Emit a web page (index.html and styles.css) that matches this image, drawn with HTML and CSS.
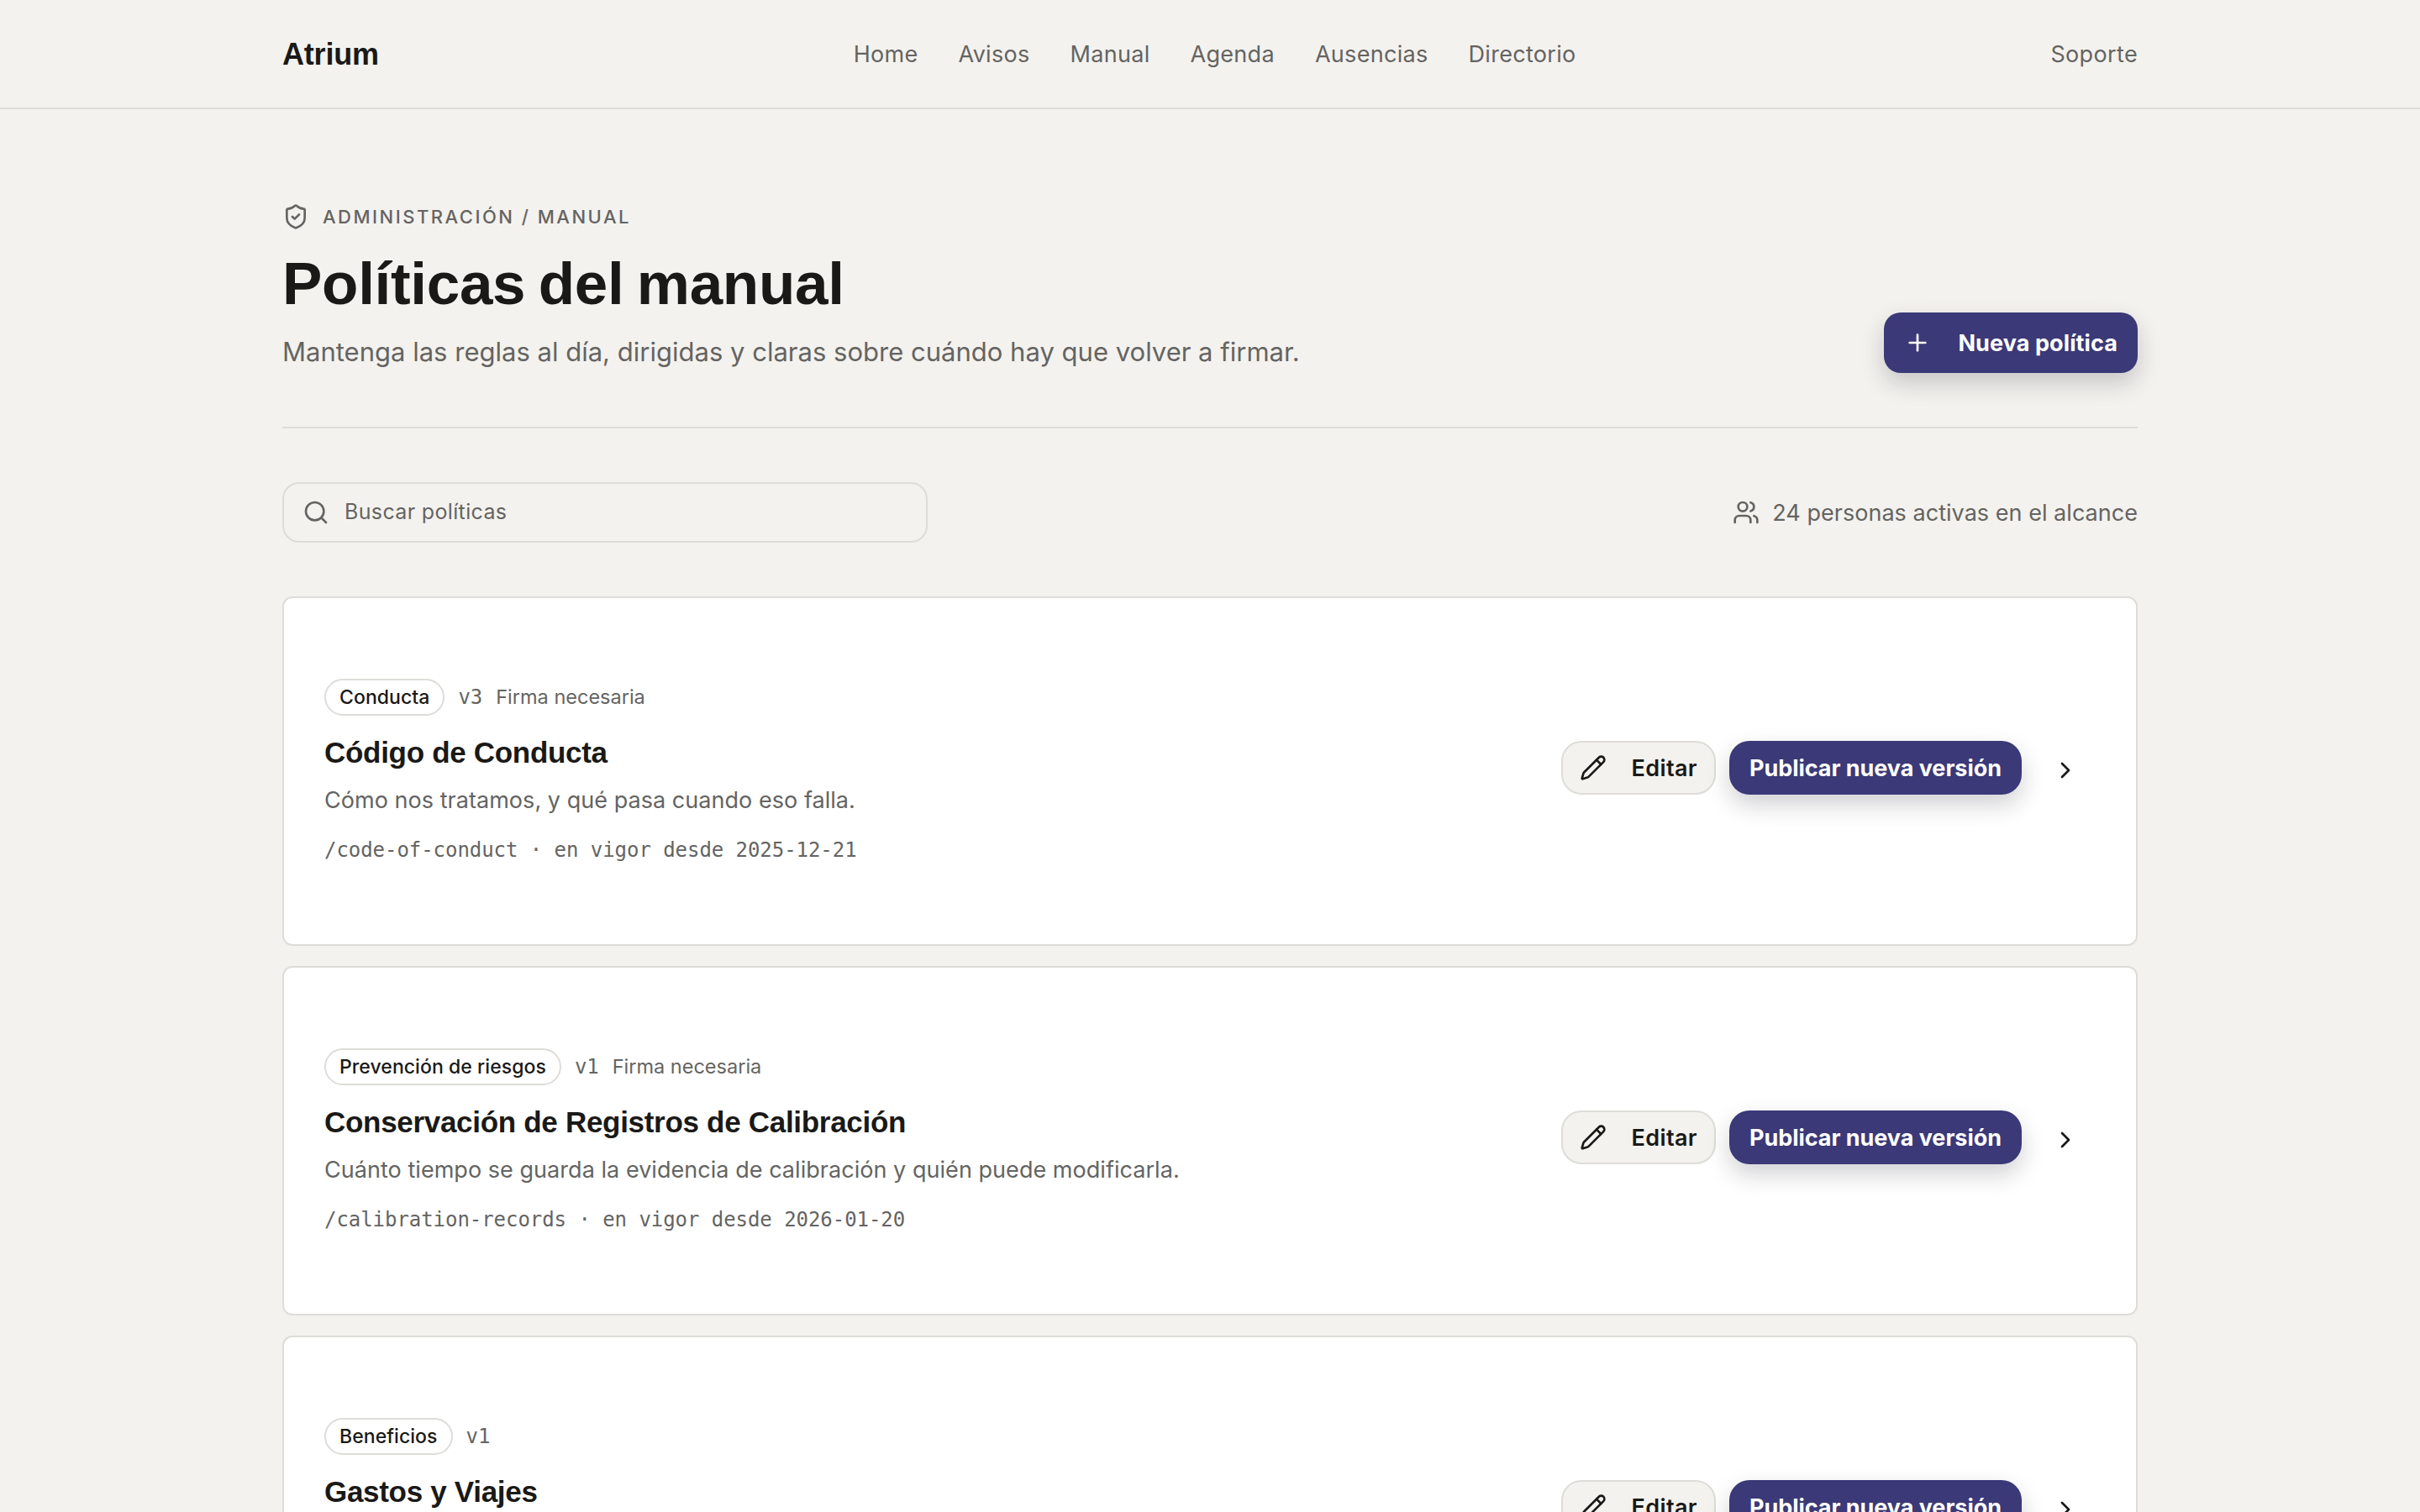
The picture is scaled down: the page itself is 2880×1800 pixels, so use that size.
FILE: index.html
```html
<!DOCTYPE html>
<html lang="es">
<head>
    <meta charset="utf-8">
    <title>Políticas del manual - Atrium</title>
    <link rel="stylesheet" href="styles.css">
</head>
<body>
    <header class="topbar">
        <div class="container topbar-inner">
            <a class="brand">Atrium</a>
            <nav class="nav">
                <a>Home</a>
                <a>Avisos</a>
                <a>Manual</a>
                <a>Agenda</a>
                <a>Ausencias</a>
                <a>Directorio</a>
            </nav>
            <a class="support">Soporte</a>
        </div>
    </header>

    <main class="container">
        <section class="page-head">
            <div>
                <div class="eyebrow">
                    <svg class="icon icon-shield" viewBox="0 0 24 24"><path d="M20 13c0 5-3.5 7.5-7.66 8.95a1 1 0 0 1-.67-.01C7.5 20.5 4 18 4 13V6a1 1 0 0 1 1-1c2 0 4.5-1.2 6.24-2.72a1.17 1.17 0 0 1 1.52 0C14.51 3.81 17 5 19 5a1 1 0 0 1 1 1z"/><path d="m9 12 2 2 4-4"/></svg>
                    <span>Administración / Manual</span>
                </div>
                <h1>Políticas del manual</h1>
                <p class="lead">Mantenga las reglas al día, dirigidas y claras sobre cuándo hay que volver a firmar.</p>
            </div>
            <button class="btn btn-primary btn-new">
                <svg class="icon icon-plus" viewBox="0 0 24 24"><path d="M5 12h14"/><path d="M12 5v14"/></svg>
                <span>Nueva política</span>
            </button>
        </section>

        <section class="toolbar">
            <label class="search">
                <svg class="icon icon-search" viewBox="0 0 24 24"><circle cx="11" cy="11" r="8"/><path d="m21 21-4.3-4.3"/></svg>
                <input type="text" placeholder="Buscar políticas">
            </label>
            <div class="scope">
                <svg class="icon icon-users" viewBox="0 0 24 24"><path d="M16 21v-2a4 4 0 0 0-4-4H6a4 4 0 0 0-4 4v2"/><circle cx="9" cy="7" r="4"/><path d="M22 21v-2a4 4 0 0 0-3-3.87"/><path d="M16 3.13a4 4 0 0 1 0 7.75"/></svg>
                <span>24 personas activas en el alcance</span>
            </div>
        </section>

        <section class="policies">
            <article class="policy">
                <div class="policy-info">
                    <div class="meta"><span class="tag">Conducta</span><span class="version">v3</span><span class="sign">Firma necesaria</span></div>
                    <h2>Código de Conducta</h2>
                    <p class="summary">Cómo nos tratamos, y qué pasa cuando eso falla.</p>
                    <p class="slug">/code-of-conduct · en vigor desde 2025-12-21</p>
                </div>
                <div class="actions">
                    <button class="btn btn-edit"><svg class="icon icon-pencil" viewBox="0 0 24 24"><path d="M21.174 6.812a1 1 0 0 0-3.986-3.987L3.842 16.174a2 2 0 0 0-.5.83l-1.321 4.352a.5.5 0 0 0 .623.622l4.353-1.32a2 2 0 0 0 .83-.497z"/><path d="m15 5 4 4"/></svg><span>Editar</span></button>
                    <button class="btn btn-primary btn-publish"><span>Publicar nueva versión</span></button>
                    <svg class="icon icon-chevron" viewBox="0 0 24 24"><path d="m9 18 6-6-6-6"/></svg>
                </div>
            </article>

            <article class="policy">
                <div class="policy-info">
                    <div class="meta"><span class="tag">Prevención de riesgos</span><span class="version">v1</span><span class="sign">Firma necesaria</span></div>
                    <h2>Conservación de Registros de Calibración</h2>
                    <p class="summary">Cuánto tiempo se guarda la evidencia de calibración y quién puede modificarla.</p>
                    <p class="slug">/calibration-records · en vigor desde 2026-01-20</p>
                </div>
                <div class="actions">
                    <button class="btn btn-edit"><svg class="icon icon-pencil" viewBox="0 0 24 24"><path d="M21.174 6.812a1 1 0 0 0-3.986-3.987L3.842 16.174a2 2 0 0 0-.5.83l-1.321 4.352a.5.5 0 0 0 .623.622l4.353-1.32a2 2 0 0 0 .83-.497z"/><path d="m15 5 4 4"/></svg><span>Editar</span></button>
                    <button class="btn btn-primary btn-publish"><span>Publicar nueva versión</span></button>
                    <svg class="icon icon-chevron" viewBox="0 0 24 24"><path d="m9 18 6-6-6-6"/></svg>
                </div>
            </article>

            <article class="policy">
                <div class="policy-info">
                    <div class="meta"><span class="tag">Beneficios</span><span class="version">v1</span></div>
                    <h2>Gastos y Viajes</h2>
                </div>
                <div class="actions">
                    <button class="btn btn-edit"><svg class="icon icon-pencil" viewBox="0 0 24 24"><path d="M21.174 6.812a1 1 0 0 0-3.986-3.987L3.842 16.174a2 2 0 0 0-.5.83l-1.321 4.352a.5.5 0 0 0 .623.622l4.353-1.32a2 2 0 0 0 .83-.497z"/><path d="m15 5 4 4"/></svg><span>Editar</span></button>
                    <button class="btn btn-primary btn-publish"><span>Publicar nueva versión</span></button>
                    <svg class="icon icon-chevron" viewBox="0 0 24 24"><path d="m9 18 6-6-6-6"/></svg>
                </div>
            </article>
        </section>
    </main>
</body>
</html>
```
FILE: styles.css
```css
* {
    box-sizing: border-box;
}

html, body {
    height: 100%;
    overflow: hidden;
}

body {
    margin: 0;
    background: #f4f2ee;
    color: #1a1917;
    font-family: Inter, "Liberation Sans", sans-serif;
    font-size: 27px;
    line-height: 40px;
}

h1, h2, p {
    margin: 0;
}

h1, h2, .brand {
    font-family: "Liberation Sans", Arial, sans-serif;
    font-weight: 700;
}

.container {
    width: 2208px;
    margin: 0 auto;
}

.icon {
    flex: none;
    fill: none;
    stroke: currentColor;
    stroke-width: 2;
    stroke-linecap: round;
    stroke-linejoin: round;
}

/* header */

.topbar {
    height: 130px;
    border-bottom: 2px solid #dddcd8;
}

.topbar-inner {
    height: 128px;
    display: flex;
    justify-content: space-between;
    align-items: center;
    color: #646462;
}

.brand {
    padding-top: 1px;
    color: #1a1917;
    font-size: 36px;
    letter-spacing: -0.2px;
}

.nav {
    display: flex;
    gap: 48px;
    padding-top: 1px;
    letter-spacing: 0.3px;
}

.support {
    padding-top: 1px;
    letter-spacing: 0.35px;
}

/* page heading */

.page-head {
    height: 380px;
    padding: 108px 0 64px;
    border-bottom: 2px solid #dddcd8;
    display: flex;
    justify-content: space-between;
    align-items: flex-end;
}

.eyebrow {
    display: flex;
    align-items: center;
    gap: 16px;
    height: 40px;
    font-size: 22px;
    font-weight: 500;
    letter-spacing: 2.5px;
    text-transform: uppercase;
    color: #646462;
}

.icon-shield {
    width: 32px;
    height: 32px;
}

h1 {
    margin-top: 20px;
    font-size: 71px;
    line-height: 80px;
    letter-spacing: -0.3px;
    word-spacing: -4px;
}

.lead {
    margin-top: 17px;
    padding-bottom: 1px;
    font-size: 31px;
    line-height: 48px;
    letter-spacing: 0.01px;
    color: #646462;
}

.btn {
    display: flex;
    align-items: center;
    border: 0;
    font-family: inherit;
    font-size: 27px;
    font-weight: 700;
    line-height: 40px;
    white-space: nowrap;
}

.btn span {
    padding-top: 1px;
}

.btn-primary {
    background: #3b3977;
    color: #fff;
    box-shadow: 0 12px 28px rgba(26, 25, 40, 0.2);
}

.btn-new {
    width: 302px;
    height: 72px;
    padding: 0 24px;
    justify-content: space-between;
    border-radius: 20px;
    letter-spacing: 0.1px;
}

.icon-plus {
    width: 32px;
    height: 32px;
}

/* search row */

.toolbar {
    margin-top: 64px;
    display: flex;
    justify-content: space-between;
    align-items: center;
    color: #646462;
}

.search {
    width: 768px;
    height: 72px;
    padding: 0 22px;
    display: flex;
    align-items: center;
    gap: 18px;
    border: 2px solid #dddcd8;
    border-radius: 20px;
}

.search input {
    flex: 1;
    border: 0;
    padding: 0 0 2px;
    background: none;
    font: inherit;
    font-size: 25px;
    letter-spacing: 0.35px;
}

.search input::placeholder {
    color: #646462;
}

.icon-search,
.icon-users {
    width: 32px;
    height: 32px;
}

.scope {
    display: flex;
    align-items: center;
    gap: 15px;
    letter-spacing: 0.03px;
}

.scope span {
    padding-top: 1px;
}

/* policy list */

.policies {
    margin-top: 64px;
    display: flex;
    flex-direction: column;
    gap: 24px;
}

.policy {
    height: 416px;
    padding: 96px 68px 0 48px;
    display: flex;
    justify-content: space-between;
    background: #fff;
    border: 2px solid #dddcd8;
    border-radius: 12px;
}

.meta {
    display: flex;
    align-items: center;
    gap: 16px;
    height: 44px;
    font-size: 23.5px;
    color: #646462;
}

.tag {
    height: 44px;
    padding: 0 16px;
    border: 2px solid #dddcd8;
    border-radius: 22px;
    color: #1a1917;
    font-size: 23px;
    font-weight: 500;
    letter-spacing: 0.06px;
}

.version,
.slug {
    font-family: "DejaVu Sans Mono", monospace;
    font-size: 24px;
    letter-spacing: -0.05px;
}

h2 {
    margin-top: 20px;
    font-size: 35px;
    line-height: 48px;
    letter-spacing: -0.3px;
}

.summary {
    margin-top: 13px;
    letter-spacing: 0.04px;
    color: #646462;
}

.slug {
    margin-top: 19px;
    color: #646462;
}

.actions {
    height: 64px;
    margin-top: 74px;
    display: flex;
    align-items: center;
}

.btn-edit {
    width: 184px;
    height: 64px;
    padding: 0 20px;
    justify-content: space-between;
    background: #f4f2ee;
    border: 2px solid #dddcd8;
    border-radius: 24px;
    color: #1a1917;
    font-weight: 600;
    letter-spacing: 0.4px;
}

.icon-pencil {
    width: 32px;
    height: 32px;
}

.btn-publish {
    width: 348px;
    height: 64px;
    margin-left: 16px;
    justify-content: center;
    border-radius: 24px;
    letter-spacing: -0.05px;
}

.icon-chevron {
    width: 32px;
    height: 32px;
    margin: 6px 0 0 36px;
}
```
